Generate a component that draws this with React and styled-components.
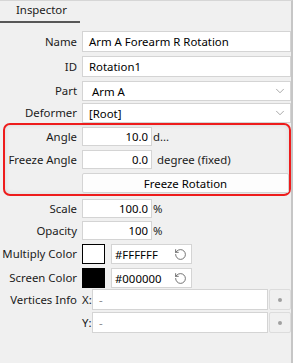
import React from 'react'
import styled, { createGlobalStyle } from 'styled-components'
import { ChevronDown, RotateCcw } from 'lucide-react'

const Global = createGlobalStyle`
  html, body { margin: 0; padding: 0; background: #f0f0f0; }
  body { font-family: "Noto Sans", "Liberation Sans", sans-serif; font-size: 11.4px; color: #1b1b1b; }
  * { box-sizing: border-box; }
`

const Panel = styled.div`
  width: 293px;
  height: 363px;
  background: #f0f0f0;
  border-top: 1px solid #d6d6d6;
  border-right: 2px solid #c6c6c6;
  display: flex;
  flex-direction: column;
`

const TabBar = styled.div`
  height: 22px;
  display: flex;
`

const Tab = styled.div`
  width: 80px;
  padding-left: 16px;
  line-height: 18px;
  border-bottom: 2px solid #575757;
  color: #1b1b1b;
`

const Body = styled.div`
  display: flex;
  flex-direction: column;
  padding-top: 8px;
`

const Row = styled.div`
  display: grid;
  grid-template-columns: ${({ $labelW }) => $labelW || 77}px 1fr;
  column-gap: 5px;
  height: ${({ $h }) => $h}px;
  margin-top: ${({ $mt }) => $mt || 0}px;
  align-items: center;
`

const Label = styled.div`
  text-align: right;
  white-space: nowrap;
  line-height: 16px;
`

const Field = styled.div`
  display: flex;
  align-items: center;
  height: 100%;
  min-width: 0;
`

const Input = styled.div`
  height: 100%;
  width: ${({ $w }) => ($w ? `${$w}px` : 'auto')};
  flex: ${({ $w }) => ($w ? 'none' : '1')};
  background: #fff;
  border: 1px solid #d4d4d4;
  display: flex;
  align-items: center;
  justify-content: ${({ $right }) => ($right ? 'flex-end' : 'flex-start')};
  padding: ${({ $right }) => ($right ? '0 3px 0 0' : '0 0 0 6px')};
  color: ${({ $muted }) => ($muted ? '#8a8a8a' : '#000')};
  white-space: nowrap;
  overflow: hidden;
`

const Select = styled(Input)`
  justify-content: space-between;
  padding: 0 3px 0 ${({ $pl }) => $pl || 6}px;
  color: #000;
  svg { color: #7a7a7a; }
`

const Unit = styled.span`
  margin-left: ${({ $ml }) => $ml || 1}px;
  white-space: nowrap;
`

const Highlight = styled.div`
  margin: 0 0 0 3px;
  border: 2px solid #ee1c1c;
  border-radius: 7px;
  padding: 2px 0 1px;
  box-shadow: inset 0 0 5px rgba(0, 0, 0, 0.1);
  display: flex;
  flex-direction: column;
`

const Button = styled.div`
  height: 100%;
  flex: 1;
  background: #fdfdfd;
  border: 1px solid #d4d4d4;
  border-radius: 2px;
  display: flex;
  align-items: center;
  justify-content: center;
  color: #000;
`

const Swatch = styled.div`
  width: 23px;
  height: 20px;
  border: 1px solid #000;
  background: ${({ $c }) => $c};
  flex: none;
`

const HexInput = styled(Input)`
  width: 81px;
  flex: none;
  margin-left: 6px;
  justify-content: space-between;
  padding: 0 4px 0 3px;
  svg { color: #555; }
`

const Axis = styled.span`
  width: 10px;
  flex: none;
  line-height: 16px;
`

const DotButton = styled.div`
  width: 22px;
  height: 100%;
  flex: none;
  margin-left: 1px;
  background: #f0f0f0;
  border: 1px solid #dcdcdc;
  border-radius: 2px;
  display: flex;
  align-items: center;
  justify-content: center;
  &::after {
    content: '';
    width: 4px;
    height: 4px;
    border-radius: 50%;
    background: #a0a0a0;
  }
`

const ColorRow = ({ label, color, hex, mt }) => (
  <Row $h={20} $mt={mt}>
    <Label>{label}</Label>
    <Field>
      <Swatch $c={color} />
      <HexInput>
        <span>{hex}</span>
        <RotateCcw size={13} strokeWidth={1.5} />
      </HexInput>
    </Field>
  </Row>
)

const App = () => {
  return (
    <Panel>
      <Global />
      <TabBar>
        <Tab>Inspector</Tab>
      </TabBar>
      <Body>
        <Row $h={21}>
          <Label>Name</Label>
          <Field><Input>Arm A Forearm R Rotation</Input></Field>
        </Row>
        <Row $h={21} $mt={4}>
          <Label>ID</Label>
          <Field><Input>Rotation1</Input></Field>
        </Row>
        <Row $h={20} $mt={4}>
          <Label>Part</Label>
          <Field>
            <Select $pl={9}><span>Arm A</span><ChevronDown size={14} strokeWidth={1.1} /></Select>
          </Field>
        </Row>
        <Row $h={20} $mt={2}>
          <Label>Deformer</Label>
          <Field>
            <Select><span>[Root]</span><ChevronDown size={14} strokeWidth={1.1} /></Select>
          </Field>
        </Row>

        <Highlight>
          <Row $h={19} $labelW={72}>
            <Label>Angle</Label>
            <Field>
              <Input $w={70} $right>10.0</Input>
              <Unit>d...</Unit>
            </Field>
          </Row>
          <Row $h={19} $mt={4} $labelW={72}>
            <Label>Freeze Angle</Label>
            <Field>
              <Input $w={70} $right>0.0</Input>
              <Unit $ml={5}>degree (fixed)</Unit>
            </Field>
          </Row>
          <Row $h={20} $mt={4} $labelW={72}>
            <span />
            <Field><Button>Freeze Rotation</Button></Field>
          </Row>
        </Highlight>

        <Row $h={19} $mt={3}>
          <Label>Scale</Label>
          <Field>
            <Input $w={70} $right>100.0</Input>
            <Unit>%</Unit>
          </Field>
        </Row>
        <Row $h={19} $mt={3}>
          <Label>Opacity</Label>
          <Field>
            <Input $w={70} $right>100</Input>
            <Unit>%</Unit>
          </Field>
        </Row>
        <ColorRow label="Multiply Color" color="#ffffff" hex="#FFFFFF" mt={4} />
        <ColorRow label="Screen Color" color="#000000" hex="#000000" mt={4} />

        <Row $h={21} $mt={1}>
          <Label>Vertices Info</Label>
          <Field>
            <Axis>X:</Axis>
            <Input $muted>-</Input>
            <DotButton />
          </Field>
        </Row>
        <Row $h={21} $mt={2}>
          <span />
          <Field>
            <Axis>Y:</Axis>
            <Input $muted>-</Input>
            <DotButton />
          </Field>
        </Row>
      </Body>
    </Panel>
  )
}

export default App
